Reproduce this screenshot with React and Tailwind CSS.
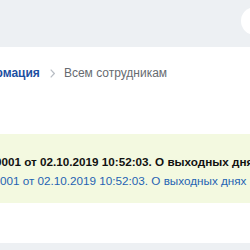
export default function App() {
  return (
    <div className="w-[250px] h-[250px] overflow-hidden bg-white flex flex-col" style={{ fontFamily: '"Liberation Sans", Arial, sans-serif' }}>
      <header className="h-[47px] shrink-0 bg-[#edf0f3] flex items-center justify-end">
        <div className="w-[28px] h-[28px] rounded-full bg-white mr-[-19px] mt-[-6px] shrink-0" />
      </header>

      <nav className="mt-[19px] flex items-center whitespace-nowrap text-[12px] leading-[14px] ml-[-38px]">
        <a className="text-[#1c4fa1] font-semibold">Информация</a>
        <span className="ml-[10px] mr-[9px] text-[#b8bdc4]">
          <svg width="5" height="9" viewBox="0 0 5 9" fill="none" stroke="currentColor" strokeWidth="1.2">
            <path d="M0.7 0.7l3.6 3.8-3.6 3.8" />
          </svg>
        </span>
        <span className="text-[#666b70]">Всем сотрудникам</span>
      </nav>

      <section className="mt-[54px] h-[69px] shrink-0 bg-[#f3f9e0] flex flex-col justify-center gap-[5px] pt-[5px] whitespace-nowrap text-[11.7px] leading-[14px]">
        <div className="font-bold text-[#111] ml-[-5px]">0001 от 02.10.2019 10:52:03. О выходных днях</div>
        <a className="text-[#1f63b3]">001 от 02.10.2019 10:52:03. О выходных днях</a>
      </section>

      <div className="mt-auto h-[7px] bg-[#edf0f3]" />
    </div>
  );
}
